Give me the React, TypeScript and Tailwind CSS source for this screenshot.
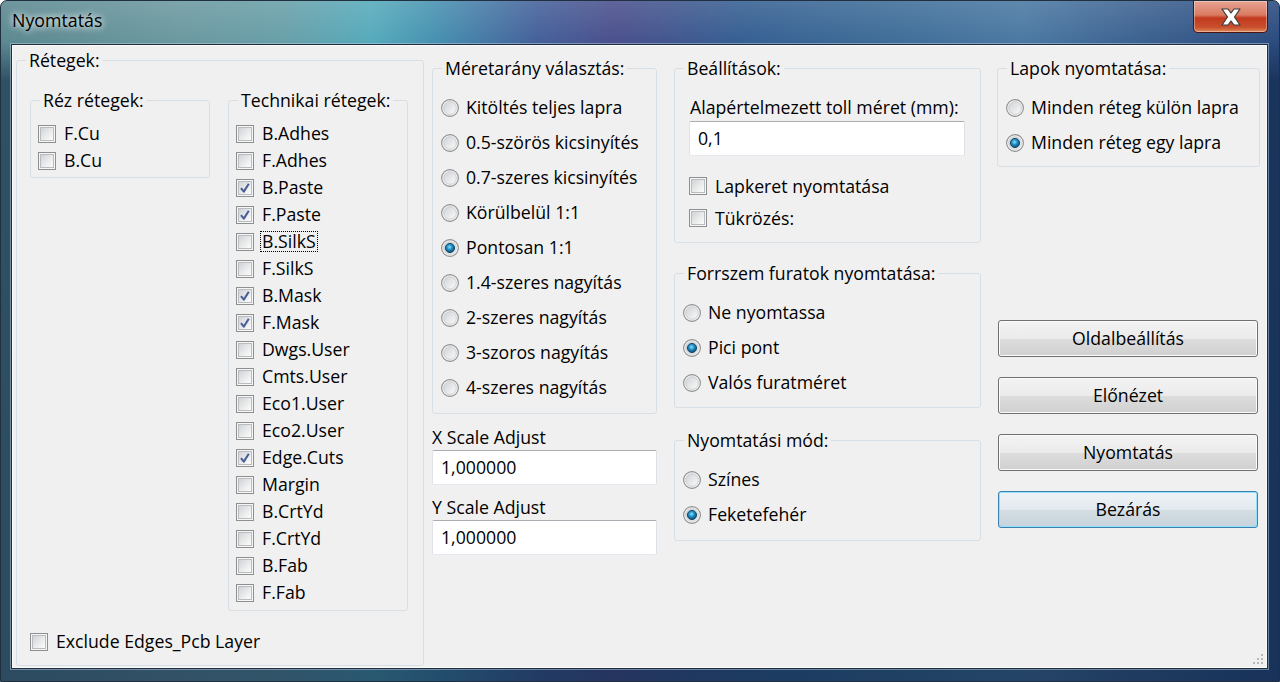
import React from "react"

const TECH: [string, boolean][] = [
  ["B.Adhes", false],
  ["F.Adhes", false],
  ["B.Paste", true],
  ["F.Paste", true],
  ["B.SilkS", false],
  ["F.SilkS", false],
  ["B.Mask", true],
  ["F.Mask", true],
  ["Dwgs.User", false],
  ["Cmts.User", false],
  ["Eco1.User", false],
  ["Eco2.User", false],
  ["Edge.Cuts", true],
  ["Margin", false],
  ["B.CrtYd", false],
  ["F.CrtYd", false],
  ["B.Fab", false],
  ["F.Fab", false],
]

const SCALES = [
  ["Kitöltés teljes lapra", false],
  ["0.5-szörös kicsinyítés", false],
  ["0.7-szeres kicsinyítés", false],
  ["Körülbelül 1:1", false],
  ["Pontosan 1:1", true],
  ["1.4-szeres nagyítás", false],
  ["2-szeres nagyítás", false],
  ["3-szoros nagyítás", false],
  ["4-szeres nagyítás", false],
] as const

function CheckBox({ checked }: { checked?: boolean }) {
  return (
    <span className="flex h-[18px] w-[18px] shrink-0 items-center justify-center border border-[#8e8f8f] bg-[#f6f6f6]">
      <span className="relative flex h-[14px] w-[14px] items-center justify-center border border-[#b9bcc1] bg-[linear-gradient(135deg,#d0d3d8_0%,#eceded_60%,#fbfbfb_100%)]">
        {checked && (
          <svg width="14" height="14" viewBox="0 0 14 14" className="absolute left-[-1px] top-[-1px]">
            <path d="M3 7.2 L5.8 10.6 L10.8 2.8" fill="none" stroke="#4a5f97" strokeWidth="2.1" strokeLinejoin="round" />
          </svg>
        )}
      </span>
    </span>
  )
}

function Radio({ checked }: { checked?: boolean }) {
  return (
    <svg width="18" height="18" viewBox="0 0 18 18" className="shrink-0">
      <defs>
        <linearGradient id="rb" x1="0" y1="0" x2="1" y2="1">
          <stop offset="0" stopColor="#cfd2d6" />
          <stop offset="1" stopColor="#fbfbfb" />
        </linearGradient>
        <radialGradient id="rd" cx="0.45" cy="0.4" r="0.65">
          <stop offset="0" stopColor="#8fe0fb" />
          <stop offset="0.45" stopColor="#1e8fc6" />
          <stop offset="1" stopColor="#0b3a5e" />
        </radialGradient>
      </defs>
      <circle cx="9" cy="9" r="8.4" fill="#f4f4f4" stroke="#8e8f8f" strokeWidth="1.1" />
      <circle cx="9" cy="9" r="6.3" fill="url(#rb)" stroke="#c3c6ca" strokeWidth="0.8" />
      {checked && <circle cx="9" cy="9" r="4.6" fill="url(#rd)" stroke="#123f60" strokeWidth="0.9" />}
    </svg>
  )
}

function Group({ title, className = "", children }: { title: string; className?: string; children: React.ReactNode }) {
  return (
    <fieldset className={`rounded-[3px] border border-[#d5dfe5] ${className}`}>
      <legend className="ml-[9px] px-[3px] leading-[22px]">{title}</legend>
      {children}
    </fieldset>
  )
}

function CheckRow({ label, checked, focus, h = "h-[27px]" }: { label: string; checked?: boolean; focus?: boolean; h?: string }) {
  return (
    <div className={`flex ${h} items-center gap-[8px]`}>
      <CheckBox checked={checked} />
      <span className={focus ? "-ml-[2px] border border-dotted border-black px-[1px] leading-[19px]" : ""}>{label}</span>
    </div>
  )
}

function RadioRow({ label, checked }: { label: string; checked?: boolean }) {
  return (
    <div className="flex h-[35px] items-center gap-[7px]">
      <Radio checked={checked} />
      <span>{label}</span>
    </div>
  )
}

function TextBox({ value, className = "" }: { value: string; className?: string }) {
  return (
    <div
      className={`flex h-[35px] items-center rounded-[2px] border border-[#abadb3] border-b-[#e3e9ef] border-l-[#e2e3ea] border-r-[#dbdfe6] bg-white pl-[8px] ${className}`}
    >
      {value}
    </div>
  )
}

function Button({ label, isDefault }: { label: string; isDefault?: boolean }) {
  return (
    <button
      type="button"
      className={
        isDefault
          ? "h-[37px] w-[260px] rounded-[3px] border border-[#3c7fb1] bg-[linear-gradient(to_bottom,#eef3f6_0%,#e3eaef_50%,#d4dde4_51%,#c9d3db_100%)] shadow-[inset_0_0_0_1px_#8fe3fb]"
          : "h-[37px] w-[260px] rounded-[3px] border border-[#707070] bg-[linear-gradient(to_bottom,#f3f3f3_0%,#ebebeb_50%,#dddddd_51%,#d0d0d0_100%)] shadow-[inset_0_0_0_1px_#fbfbfb]"
      }
    >
      {label}
    </button>
  )
}

export default function App() {
  return (
    <div className="h-[682px] w-[1280px] overflow-hidden rounded-t-[7px] border border-[#20303f] bg-[linear-gradient(to_bottom,rgba(12,30,58,0)_0px,rgba(12,30,58,0)_42px,rgba(12,34,64,0.55)_80px,rgba(12,34,64,0.6)_100%),linear-gradient(90deg,#5b8890_0%,#6b98a0_14%,#689fa8_22%,#55aabb_29%,#4690b0_34%,#44609a_42%,#4a4f8c_48%,#355f92_58%,#3e6d98_70%,#4a78a2_80%,#3a5f8e_90%,#2a4a7e_100%)] font-['Open_Sans',sans-serif] text-[17.7px] text-black">
      <div className="flex h-[43px] items-start justify-between bg-[linear-gradient(to_bottom,rgba(255,255,255,0.12),rgba(255,255,255,0))]">
        <div className="pl-[11px] pt-[7px] text-[17.8px] leading-[24px] [text-shadow:0_0_6px_#ffffff,0_0_10px_rgba(255,255,255,0.7)]">
          Nyomtatás
        </div>
        <div className="mr-[11px] flex h-[32px] w-[75px] items-center justify-center rounded-b-[5px] border border-t-0 border-[#4a1410] bg-[linear-gradient(to_bottom,#e8a493_0%,#d97a62_45%,#c2391e_55%,#c8502e_85%,#e08a5a_100%)] shadow-[inset_0_0_0_1px_rgba(255,255,255,0.35)]">
          <svg width="26" height="20" viewBox="0 0 26 20">
            <path
              d="M4 2 H10 L13 6 L16 2 H22 L16.5 10 L22 18 H16 L13 14 L10 18 H4 L9.5 10 Z"
              fill="#ffffff"
              stroke="#3a3a3a"
              strokeWidth="1.2"
              strokeLinejoin="round"
            />
          </svg>
        </div>
      </div>

      <div className="ml-[10px] mr-[11px] h-[625px] border border-[#1e2c3c] shadow-[0_0_0_1px_rgba(190,210,230,0.5)]">
        <div className="relative flex h-full border border-[#fbfbfb] bg-[#f0f0f0]">
          <Group title="Rétegek:" className="ml-[3px] mt-[3px] h-[617px] w-[408px]">
            <div className="ml-[13px] mt-[18px] flex items-start gap-[18px]">
              <Group title="Réz rétegek:" className="w-[180px]">
                <div className="pb-[3px] pl-[7px] pt-[9px]">
                  <CheckRow label="F.Cu" />
                  <CheckRow label="B.Cu" />
                </div>
              </Group>
              <Group title="Technikai rétegek:" className="w-[180px]">
                <div className="pb-[4px] pl-[7px] pt-[9px]">
                  {TECH.map(([name, on]) => (
                    <CheckRow key={name} label={name} checked={on} focus={name === "B.SilkS"} />
                  ))}
                </div>
              </Group>
            </div>
            <div className="ml-[13px] mt-[17px]">
              <CheckRow label="Exclude Edges_Pcb Layer" />
            </div>
          </Group>

          <div className="ml-[8px] mt-[11px] w-[225px]">
            <Group title="Méretarány választás:">
              <div className="pb-[8px] pl-[8px] pt-[11px]">
                {SCALES.map(([name, on]) => (
                  <RadioRow key={name} label={name} checked={on} />
                ))}
              </div>
            </Group>
            <div className="mt-[12px] leading-[22px]">X Scale Adjust</div>
            <TextBox value="1,000000" className="mt-[2px]" />
            <div className="mt-[11px] leading-[22px]">Y Scale Adjust</div>
            <TextBox value="1,000000" className="mt-[2px]" />
          </div>

          <div className="ml-[17px] mt-[11px] w-[307px]">
            <Group title="Beállítások:">
              <div className="pb-[8px] pl-[14px] pr-[15px]">
                <div className="ml-[1px] mt-[17px] leading-[22px]">Alapértelmezett toll méret (mm):</div>
                <TextBox value="0,1" className="mt-[3px]" />
                <div className="mt-[14px]">
                  <CheckRow label="Lapkeret nyomtatása" h="h-[32px]" />
                  <CheckRow label="Tükrözés:" h="h-[32px]" />
                </div>
              </div>
            </Group>
            <Group title="Forrszem furatok nyomtatása:" className="mt-[19px]">
              <div className="pb-[7px] pl-[8px] pt-[11px]">
                <RadioRow label="Ne nyomtassa" />
                <RadioRow label="Pici pont" checked />
                <RadioRow label="Valós furatméret" />
              </div>
            </Group>
            <Group title="Nyomtatási mód:" className="mt-[21px]">
              <div className="pb-[8px] pl-[8px] pt-[11px]">
                <RadioRow label="Színes" />
                <RadioRow label="Feketefehér" checked />
              </div>
            </Group>
          </div>

          <div className="ml-[16px] mt-[11px] w-[263px]">
            <Group title="Lapok nyomtatása:">
              <div className="pb-[6px] pl-[8px] pt-[11px]">
                <RadioRow label="Minden réteg külön lapra" />
                <RadioRow label="Minden réteg egy lapra" checked />
              </div>
            </Group>
            <div className="ml-[1px] mt-[153px] flex flex-col gap-[20px]">
              <Button label="Oldalbeállítás" />
              <Button label="Előnézet" />
              <Button label="Nyomtatás" />
              <Button label="Bezárás" isDefault />
            </div>
          </div>

          <svg width="12" height="12" viewBox="0 0 12 12" className="absolute bottom-[2px] right-[2px]">
            {[
              [9, 1],
              [9, 5],
              [5, 5],
              [9, 9],
              [5, 9],
              [1, 9],
            ].map(([x, y]) => (
              <rect key={`${x}-${y}`} x={x} y={y} width="2" height="2" fill="#b8b8b8" />
            ))}
          </svg>
        </div>
      </div>
    </div>
  )
}
